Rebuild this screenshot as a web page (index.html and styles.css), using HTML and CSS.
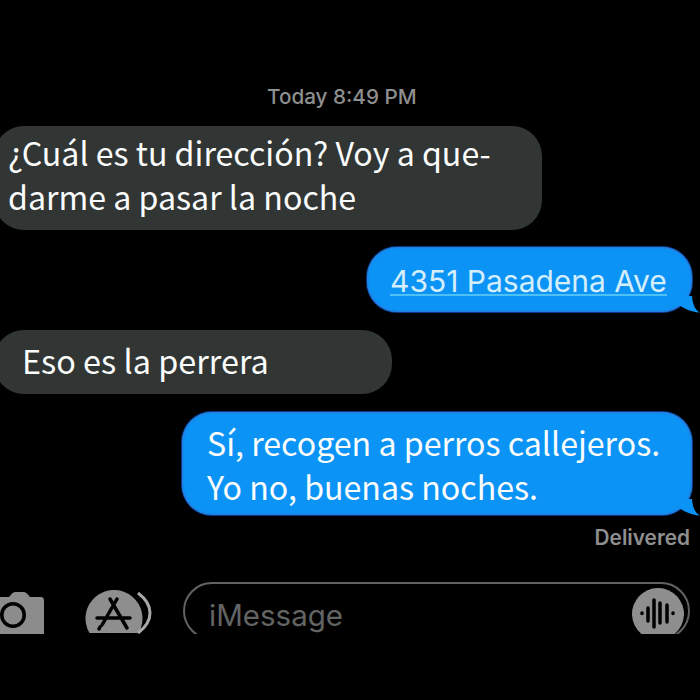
FILE: index.html
```html
<!DOCTYPE html>
<html lang="es">
<head>
<meta charset="utf-8">
<title>Mensajes</title>
<link rel="stylesheet" href="styles.css">
</head>
<body>
<main class="screen">
  <div class="thread">
    <p class="time">Today 8:49 PM</p>
    <div class="bubble in first">¿Cuál es tu dirección? Voy a que-<br>darme a pasar la noche</div>
    <div class="bubble out address">
      <span class="link">4351 Pasadena Ave</span>
      <svg class="tail" viewBox="0 0 24 20"><path d="M2 8.500C8 12 14 16 24 16.500C19 14 16.500 8 16 0L2 0Z"/></svg>
    </div>
    <div class="bubble in third">Eso es la perrera</div>
    <div class="bubble out fourth">Sí, recogen a perros callejeros.<br>Yo no, buenas noches.
      <svg class="tail" viewBox="0 0 24 20"><path d="M2 8.500C8 12 14 16 24 16.500C19 14 16.500 8 16 0L2 0Z"/></svg>
    </div>
    <p class="delivered">Delivered</p>
  </div>
  <div class="composer">
    <svg class="camera" viewBox="0 0 44 44"><path fill-rule="evenodd" d="M0 7H9L12 3.500C13 2.500 14 2 15 2H24C25 2 26 2.500 27 3.500L30 7H41C42.500 7 44 8 44 10V44H0ZM26 25A13 13 0 1 0 0 25A13 13 0 1 0 26 25ZM22.500 25A9.500 9.500 0 1 1 3.500 25A9.500 9.500 0 1 1 22.500 25Z"/></svg>
    <svg class="store" viewBox="0 0 68 44">
      <path class="disc" d="M5.500 43A28.500 28.500 0 1 1 54.500 43Z"/>
      <path class="ring" d="M54 3C62 9 66 16 66 23C66 30 62 37 54 43"/>
      <path class="mark" d="M26 9L43 38M33 9L18 35M13 28H46M16 37L15 39"/>
    </svg>
    <div class="field">
      <span class="placeholder">iMessage</span>
      <svg class="voice" viewBox="0 0 58 46">
        <path class="disc" d="M12.400 46A26 26 0 1 1 45.600 46Z"/>
        <path class="bars" d="M13 25V25.500M19 20V33M25 12V39M31 15V35M38 17V34M44 25V25.500"/>
      </svg>
    </div>
  </div>
</main>
</body>
</html>
```
FILE: styles.css
```css
* { box-sizing: border-box; }
html, body { margin: 0; background: #000; }
.screen {
  width: 700px;
  height: 700px;
  overflow: hidden;
  background: #000;
  display: flex;
  flex-direction: column;
  padding-top: 84px;
}
.thread { display: flex; flex-direction: column; }
.time {
  margin: 0 0 27px;
  height: 15px;
  padding-left: 267px;
  font: 500 20.700px/26px Inter, "Liberation Sans", sans-serif;
  color: #8e8f8f;
}
.bubble {
  position: relative;
  font-family: "Noto Sans CJK SC", "Noto Sans", sans-serif;
  font-size: 32.150px;
  line-height: 44px;
  color: #fbfcfc;
  white-space: nowrap;
}
.in { background: #313635; align-self: flex-start; margin-left: -6px; }
.out {
  background: #0b94f6;
  box-shadow: 0 0 0 1px #0b3a86, inset 0 0 2px 1px #2b78d8;
  align-self: flex-end;
  margin-right: 8px;
}
.first { width: 548px; height: 104px; border-radius: 30px; padding: 4px 0 0 14px; }
.address {
  width: 325px;
  height: 65px;
  margin-top: 17px;
  border-radius: 30px;
  padding-left: 23px;
  display: flex;
  align-items: center;
  font-family: Inter, "Liberation Sans", sans-serif;
  font-size: 30px;
}
.link {
  color: #d4eefb;
  line-height: 26px;
  margin-top: 4px;
  border-bottom: 2px solid #4fc0f4;
}
.third { width: 398px; height: 64px; margin-top: 18px; border-radius: 30px; padding: 8px 0 0 28px; font-size: 32.400px; }
.fourth { width: 510px; height: 103px; margin-top: 18px; border-radius: 30px; padding: 8px 0 0 25px; }
.tail {
  position: absolute;
  right: -8px;
  bottom: -4px;
  width: 24px;
  height: 20px;
  fill: #0b94f6;
}
.delivered {
  margin: 11px 10px 0 0;
  text-align: right;
  font: 600 20.800px/24px Inter, "Liberation Sans", sans-serif;
  color: #8f8f8f;
}
.composer {
  height: 52px;
  margin-top: 32px;
  display: flex;
  align-items: flex-start;
  overflow: hidden;
}
.camera { width: 44px; height: 44px; margin-top: 8px; fill: #8c8c8c; flex: none; }
.store { width: 68px; height: 44px; margin: 8px 0 0 40px; flex: none; }
.disc { fill: #8e8e8e; }
.ring { fill: none; stroke: #a8a8a8; stroke-width: 3; }
.mark { fill: none; stroke: #000; stroke-width: 3.500; stroke-linecap: round; }
.field {
  width: 507px;
  height: 58px;
  margin-left: 31px;
  border: 2px solid #626262;
  border-radius: 29px;
  display: flex;
  justify-content: space-between;
  padding: 0 0 0 24px;
}
.placeholder {
  font: 400 29.500px/62px Inter, "Liberation Sans", sans-serif;
  color: #636464;
}
.voice { width: 58px; height: 46px; margin: 4px 1px 0 0; flex: none; }
.bars { fill: none; stroke: #000; stroke-width: 3.500; stroke-linecap: round; }
```
